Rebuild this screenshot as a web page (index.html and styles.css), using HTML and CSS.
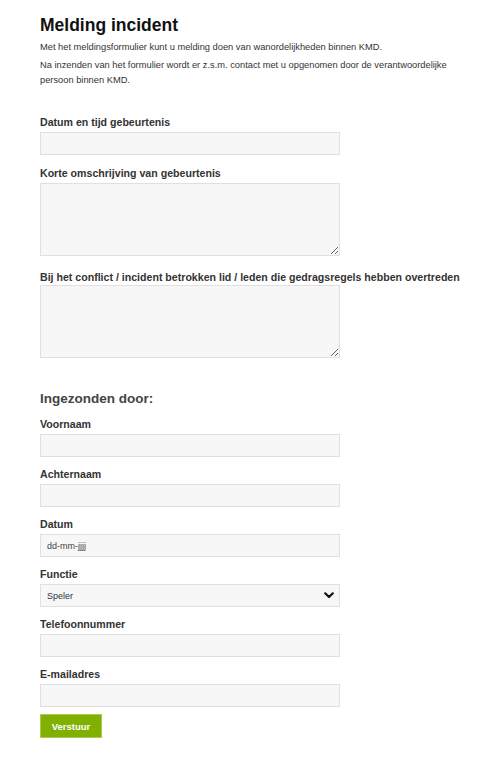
FILE: index.html
```html
<!DOCTYPE html>
<html lang="nl">
<head>
<meta charset="utf-8">
<title>Melding incident</title>
<link rel="stylesheet" href="styles.css">
</head>
<body>
<main class="page">
  <h1 class="title">Melding incident</h1>
  <p class="intro">Met het meldingsformulier kunt u melding doen van wanordelijkheden binnen KMD.</p>
  <p class="intro">Na inzenden van het formulier wordt er z.s.m. contact met u opgenomen door de verantwoordelijke persoon binnen KMD.</p>

  <form class="form">
    <div class="field field-first">
      <label class="label" for="f1">Datum en tijd gebeurtenis</label>
      <input class="input" id="f1" type="text">
    </div>
    <div class="field field-area">
      <label class="label" for="f2">Korte omschrijving van gebeurtenis</label>
      <textarea class="input area" id="f2"></textarea>
    </div>
    <div class="field field-area">
      <label class="label label-tight" for="f3">Bij het conflict / incident betrokken lid / leden die gedragsregels hebben overtreden</label>
      <textarea class="input area" id="f3"></textarea>
    </div>

    <h2 class="subtitle">Ingezonden door:</h2>

    <div class="field">
      <label class="label" for="f4">Voornaam</label>
      <input class="input" id="f4" type="text">
    </div>
    <div class="field">
      <label class="label" for="f5">Achternaam</label>
      <input class="input" id="f5" type="text">
    </div>
    <div class="field">
      <label class="label" for="f6">Datum</label>
      <input class="input" id="f6" type="text" placeholder="dd-mm-jjjj">
    </div>
    <div class="field">
      <label class="label" for="f7">Functie</label>
      <div class="select-wrap">
        <select class="input select" id="f7">
          <option>Speler</option>
          <option>Trainer</option>
          <option>Ouder</option>
        </select>
        <svg class="chevron" width="10" height="7" viewBox="0 0 10 7" aria-hidden="true">
          <path d="M1.2 1.3 L5 5 L8.8 1.3" fill="none" stroke="#111" stroke-width="2.2" stroke-linecap="round" stroke-linejoin="round"/>
        </svg>
      </div>
    </div>
    <div class="field">
      <label class="label" for="f8">Telefoonnummer</label>
      <input class="input" id="f8" type="text">
    </div>
    <div class="field field-last">
      <label class="label" for="f9">E-mailadres</label>
      <input class="input" id="f9" type="text">
    </div>
    <button class="button" type="button">Verstuur</button>
  </form>
</main>
</body>
</html>
```
FILE: styles.css
```css
* { box-sizing: border-box; }

html, body {
  margin: 0;
  padding: 0;
  background: #ffffff;
}

body {
  font-family: "Liberation Sans", Arial, sans-serif;
  color: #333333;
}

.page {
  padding: 14px 16px 20px 40px;
}

.title {
  margin: 0 0 4px 0;
  font-size: 17.5px;
  line-height: 22px;
  font-weight: bold;
  color: #111111;
}

.intro {
  margin: 0 0 3px 0;
  font-size: 9.3px;
  line-height: 15px;
  color: #333333;
  max-width: 420px;
}

.form {
  margin-top: 27px;
  display: flex;
  flex-direction: column;
}

.field {
  display: flex;
  flex-direction: column;
  margin-bottom: 10px;
}

.field-first {
  margin-bottom: 11px;
}

.field-area {
  margin-bottom: 14px;
}

.field-last {
  margin-bottom: 7px;
}

.label {
  font-size: 10.6px;
  line-height: 14px;
  font-weight: bold;
  color: #333333;
  margin-bottom: 3px;
  white-space: nowrap;
}

.label-tight {
  margin-bottom: 1px;
}

.input {
  display: block;
  width: 300px;
  height: 23px;
  margin: 0;
  padding: 0 6px;
  border: 1px solid #e0e0e0;
  border-radius: 0;
  background: #f7f7f7;
  font-family: "Liberation Sans", Arial, sans-serif;
  font-size: 9px;
  color: #333333;
  outline: none;
}

.input::placeholder {
  color: #444444;
  opacity: 1;
}

.area {
  height: 73px;
  padding: 4px 6px;
  resize: vertical;
}

.subtitle {
  margin: 18px 0 9px 0;
  font-size: 13.5px;
  line-height: 18px;
  font-weight: bold;
  color: #444444;
}

.select-wrap {
  position: relative;
  width: 300px;
}

.select {
  appearance: none;
  -webkit-appearance: none;
  cursor: pointer;
}

.chevron {
  position: absolute;
  right: 6px;
  top: 8px;
  pointer-events: none;
}

.button {
  align-self: flex-start;
  width: 62px;
  height: 24px;
  margin: 0;
  padding: 0;
  border: 1px solid #a9c95a;
  background: #80b000;
  color: #ffffff;
  font-family: "Liberation Sans", Arial, sans-serif;
  font-size: 9.5px;
  font-weight: bold;
  cursor: pointer;
}
```
